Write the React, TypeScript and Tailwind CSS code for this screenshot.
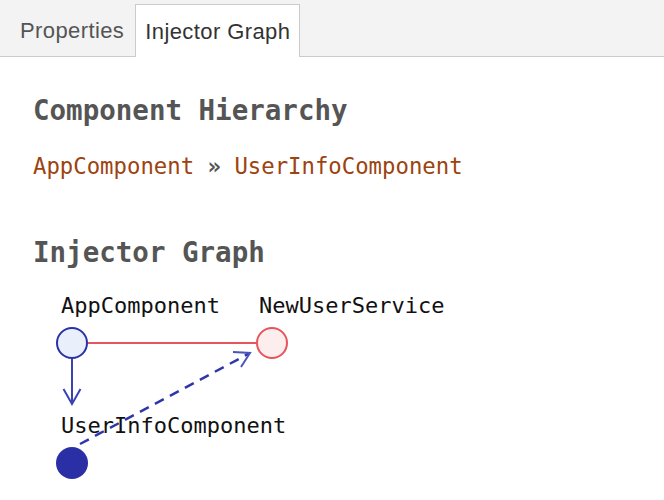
const mono = "font-['DejaVu_Sans_Mono','Liberation_Mono',monospace]";

function Tabs() {
  return (
    <div className="flex h-[57px] items-end border-b border-[#cbcbcb] bg-[#f3f3f3] pl-[10px] font-['Liberation_Sans',Arial,sans-serif] text-[22px] tracking-[0.4px]">
      <div className="flex h-[52px] items-center px-[10px] text-[#555]">Properties</div>
      <div className="-mb-px ml-px flex h-[53px] items-center border border-b-0 border-[#cbcbcb] bg-white px-[9px] text-[#333]">
        Injector Graph
      </div>
    </div>
  );
}

function Graph() {
  const blue = "#3a43b2";
  return (
    <svg width="430" height="212" className="mt-[13px] block" style={{ fontFamily: "'DejaVu Sans Mono', monospace" }}>
      <text x="28" y="32" fontSize="22" fill="#111">AppComponent</text>
      <text x="226" y="32" fontSize="22" fill="#111">NewUserService</text>
      <text x="28" y="152" fontSize="22" fill="#111">UserInfoComponent</text>

      <line x1="55" y1="62" x2="223" y2="62" stroke="#e9535c" strokeWidth="2" />
      <line x1="39" y1="78" x2="39" y2="122" stroke={blue} strokeWidth="2" />
      <polyline points="30.5,108 39,123 47.5,108" fill="none" stroke={blue} strokeWidth="2" />

      <line x1="47" y1="163" x2="216" y2="72.5" stroke="#2f36a8" strokeWidth="2.5" strokeDasharray="10 7" />
      <polyline points="200,71 217,72 208,86" fill="none" stroke="#4a53bd" strokeWidth="2" />

      <circle cx="39" cy="62" r="15" fill="#e9f0fb" stroke="#2b31a6" strokeWidth="2" />
      <circle cx="239" cy="62" r="15" fill="#fdeeee" stroke="#e9535c" strokeWidth="2" />
      <circle cx="39" cy="182" r="16" fill="#2b2fa6" />
    </svg>
  );
}

export default function App() {
  return (
    <div className="h-[500px] w-[664px] overflow-hidden bg-white">
      <Tabs />
      <div className="pl-[33px]">
        <h2 className={`mt-[37px] text-[27.5px] font-bold leading-[32px] text-[#555] ${mono}`}>Component Hierarchy</h2>
        <p className={`mt-[26px] text-[22.3px] leading-[28px] ${mono}`}>
          <span className="text-[#9c4310]">AppComponent</span>
          <span className="font-bold text-[#555]"> » </span>
          <span className="text-[#9c4310]">UserInfoComponent</span>
        </p>
        <h2 className={`mt-[56px] text-[27.5px] font-bold leading-[32px] text-[#555] ${mono}`}>Injector Graph</h2>
        <Graph />
      </div>
    </div>
  );
}
